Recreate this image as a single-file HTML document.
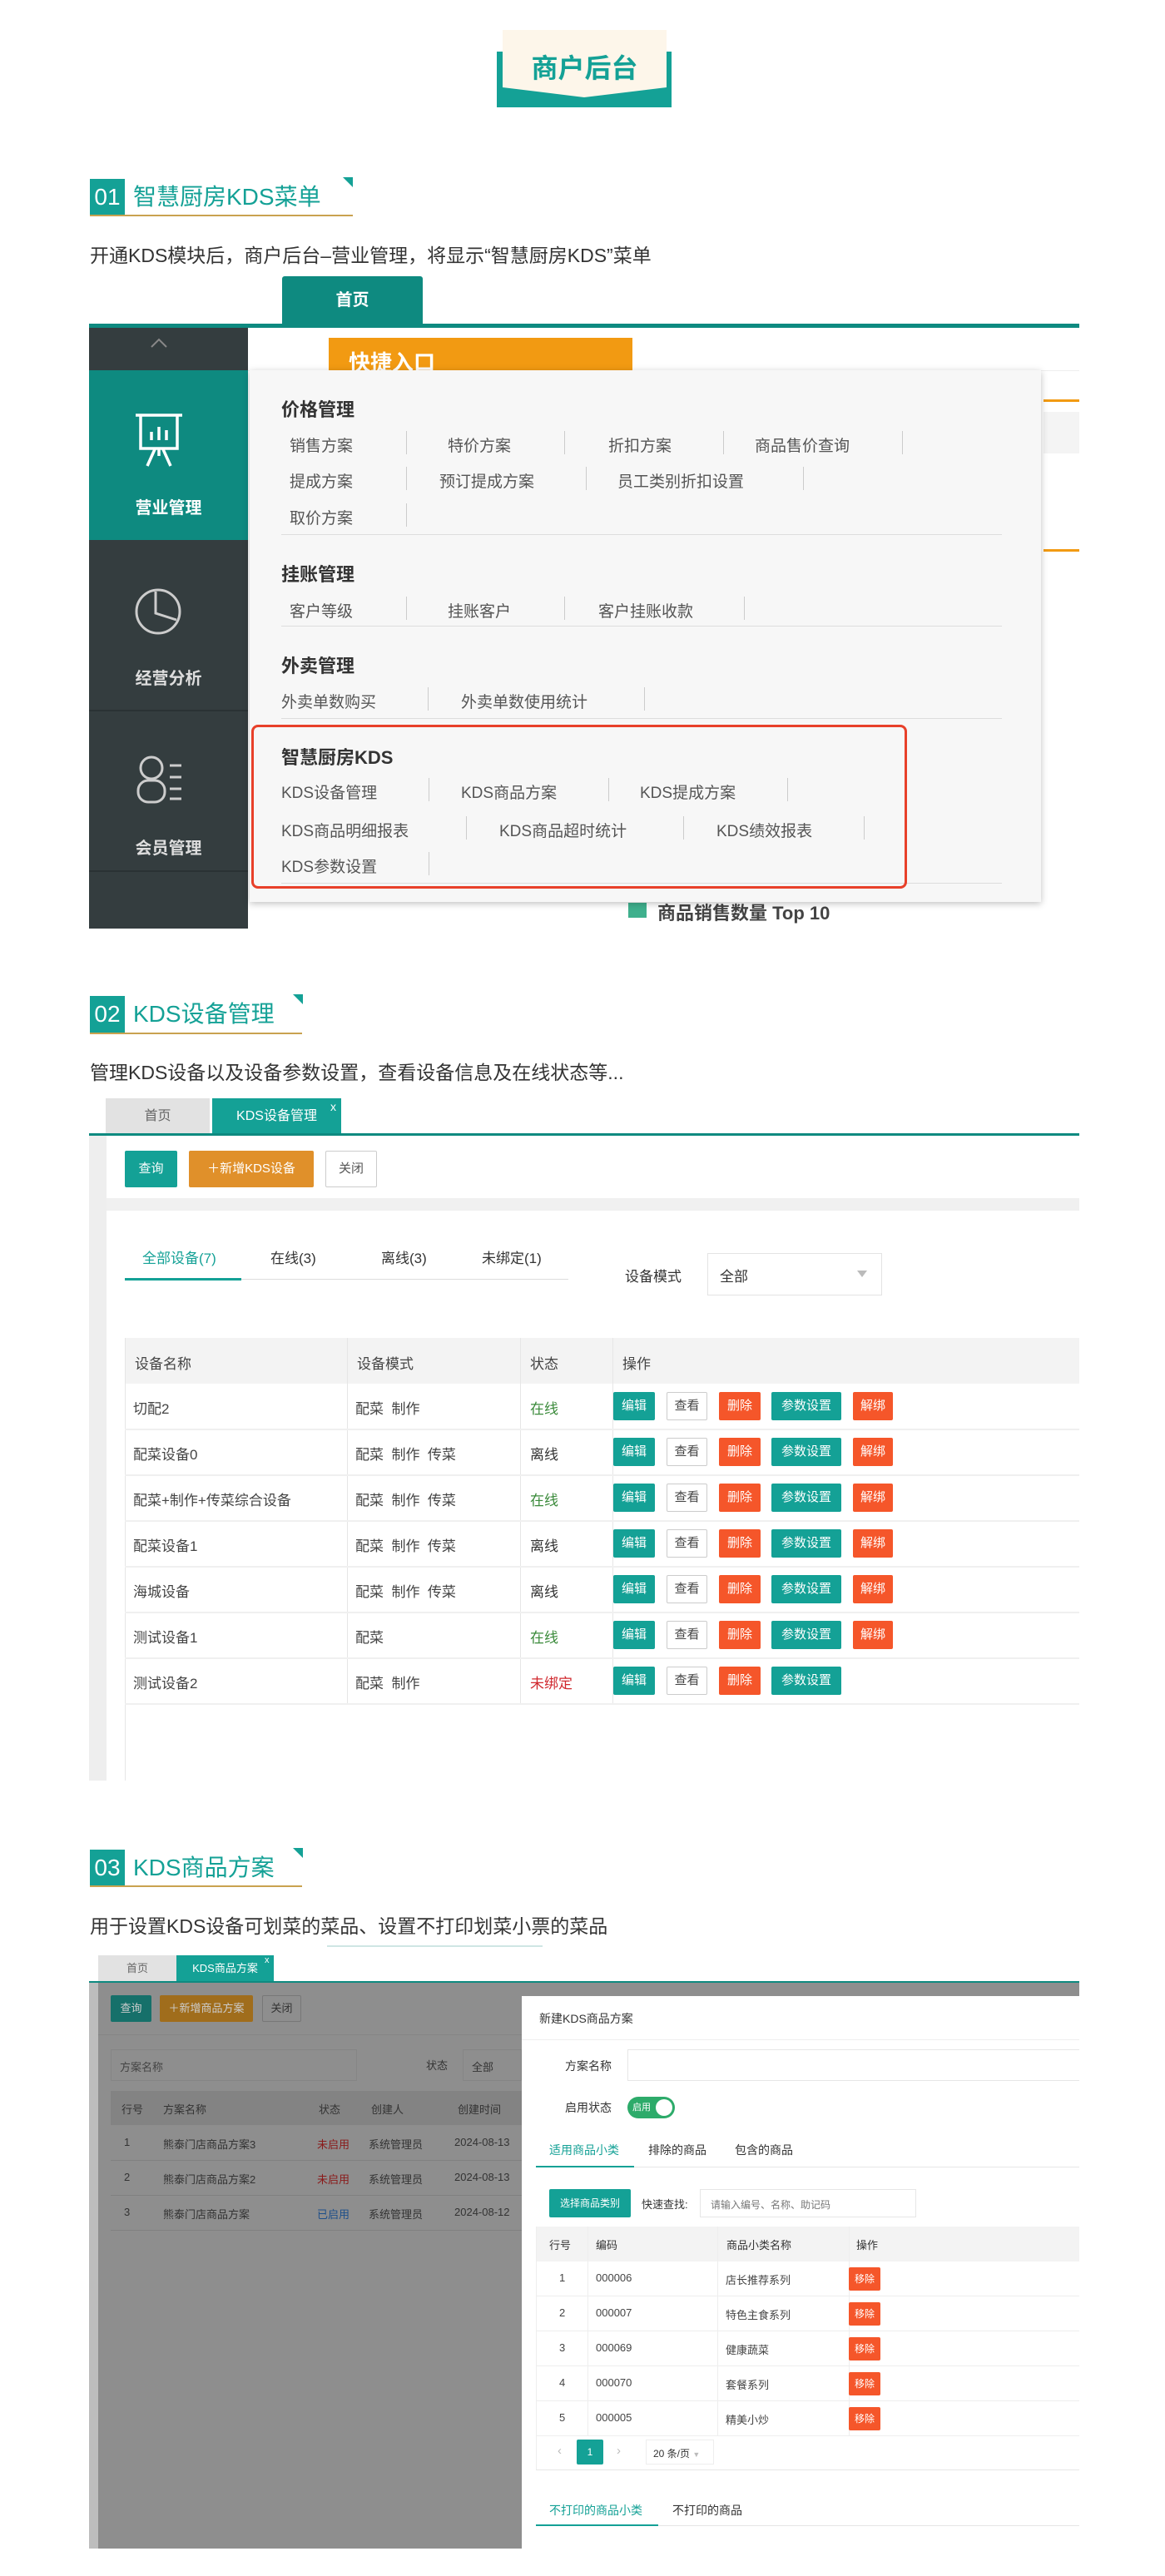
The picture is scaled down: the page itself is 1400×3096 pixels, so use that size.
<!DOCTYPE html>
<html><head><meta charset="utf-8"><style>
*{margin:0;padding:0;box-sizing:border-box}
body{width:1400px;height:3096px;background:#fff;position:relative;overflow:hidden;font-family:"Liberation Sans","Noto Sans CJK SC",sans-serif;color:#333}
.a{position:absolute;white-space:nowrap}
.sep{position:absolute;width:1px;background:#ccc}
.hl{position:absolute;height:1px;background:#ddd}
.btn{position:absolute;color:#fff;font-size:15px;text-align:center;border-radius:2px}
</style></head><body>

<!-- header badge -->
<div class="a" style="left:604px;top:36px;width:197px;height:70px;background:#fdf6ea"></div>
<div class="a" style="left:597px;top:62px;width:210px;height:67px;background:#14a196"></div>
<svg class="a" style="left:604px;top:62px" width="197" height="58"><polygon points="0,0 197,0 197,43 98,55 0,43" fill="#fdf6ea"/></svg>
<div class="a" style="left:604px;top:60px;width:197px;text-align:center;font-size:32px;font-weight:bold;color:#14a196;line-height:44px">商户后台</div>

<!-- section 01 -->
<div class="a" style="left:108px;top:215px;width:42px;height:43px;background:#14a196;color:#fff;font-size:28px;line-height:43px;text-align:center">01</div>
<div class="a" style="left:160px;top:215px;font-size:28px;line-height:43px;color:#14a196">智慧厨房KDS菜单</div>
<div class="a" style="left:108px;top:258px;width:316px;height:2px;background:#c9a24f"></div>
<svg class="a" style="left:410px;top:213px" width="14" height="14"><polygon points="2,0 14,0 14,12" fill="#14a196"/></svg>
<div class="a" style="left:108px;top:288px;font-size:23px;color:#333">开通KDS模块后，商户后台–营业管理，将显示“智慧厨房KDS”菜单</div>

<!-- screenshot 1 -->
<div class="a" style="left:339px;top:332px;width:169px;height:58px;background:#0e8a80;border-radius:3px 3px 0 0;color:#fff;font-size:20px;font-weight:bold;text-align:center;line-height:58px">首页</div>
<div class="a" style="left:107px;top:389px;width:1190px;height:5px;background:#0e8a80"></div>
<div class="a" style="left:107px;top:394px;width:191px;height:722px;background:#343d3f"></div>
<div class="a" style="left:107px;top:445px;width:191px;height:204px;background:#0e8a80"></div>
<div class="a" style="left:107px;top:853px;width:191px;height:2px;background:#2a3234"></div>
<div class="a" style="left:107px;top:1046px;width:191px;height:2px;background:#2a3234"></div>
<svg class="a" style="left:180px;top:405px" width="22" height="14"><polyline points="2,12 11,3 20,12" fill="none" stroke="#888" stroke-width="2"/></svg>
<svg class="a" style="left:160px;top:495px" width="62" height="70" fill="none" stroke="#fff" stroke-width="3.5"><path d="M3 4h56M9 4v40h44V4M22 24v10M31 18v16M40 22v12M26 45l-9 20M36 45l9 20M31 45v8"/></svg>
<div class="a" style="left:107px;top:594px;width:191px;text-align:center;color:#fff;font-size:20px;font-weight:bold">营业管理</div>
<svg class="a" style="left:160px;top:705px" width="60" height="60" fill="none" stroke="#ccc" stroke-width="3"><circle cx="30" cy="30" r="26"/><path d="M27 6v26l25 8"/></svg>
<div class="a" style="left:107px;top:799px;width:191px;text-align:center;color:#ddd;font-size:20px;font-weight:bold">经营分析</div>
<svg class="a" style="left:162px;top:906px" width="60" height="62" fill="none" stroke="#ccc" stroke-width="3"><circle cx="20" cy="17" r="13"/><rect x="4" y="32" width="32" height="26" rx="12"/><path d="M42 14h14M42 28h14M42 42h14M42 54h14"/></svg>
<div class="a" style="left:107px;top:1003px;width:191px;text-align:center;color:#ddd;font-size:20px;font-weight:bold">会员管理</div>
<div class="a" style="left:298px;top:394px;width:999px;height:722px;background:#fff"></div>
<div class="a" style="left:298px;top:394px;width:999px;height:52px;background:#fff;border-bottom:1px solid #eee"></div>
<div class="a" style="left:395px;top:406px;width:365px;height:54px;background:#f29a12;color:#fff;font-size:26px;font-weight:bold;padding:10px 24px">快捷入口</div>
<div class="a" style="left:1254px;top:480px;width:43px;height:3px;background:#f29a12"></div>
<div class="a" style="left:1254px;top:660px;width:43px;height:3px;background:#f29a12"></div>
<div class="a" style="left:1254px;top:495px;width:43px;height:50px;background:#f4f4f4"></div>
<div class="a" style="left:755px;top:1085px;width:22px;height:18px;background:#3fb08d"></div>
<div class="a" style="left:790px;top:1080px;font-size:22px;font-weight:bold;color:#444">商品销售数量 Top 10</div>

<!-- popup -->
<div class="a" style="left:300px;top:445px;width:951px;height:639px;background:#f7f7f7;box-shadow:0 2px 8px rgba(0,0,0,.25)"></div>
<div class="a" style="left:338px;top:475px;font-size:22px;font-weight:bold;color:#333">价格管理</div>
<div class="a" style="left:348px;top:521px;font-size:19px;color:#555">销售方案</div>
<div class="a" style="left:538px;top:521px;font-size:19px;color:#555">特价方案</div>
<div class="a" style="left:731px;top:521px;font-size:19px;color:#555">折扣方案</div>
<div class="a" style="left:907px;top:521px;font-size:19px;color:#555">商品售价查询</div>
<div class="sep" style="left:488px;top:518px;height:28px"></div><div class="sep" style="left:678px;top:518px;height:28px"></div><div class="sep" style="left:869px;top:518px;height:28px"></div><div class="sep" style="left:1084px;top:518px;height:28px"></div>
<div class="a" style="left:348px;top:564px;font-size:19px;color:#555">提成方案</div>
<div class="a" style="left:528px;top:564px;font-size:19px;color:#555">预订提成方案</div>
<div class="a" style="left:742px;top:564px;font-size:19px;color:#555">员工类别折扣设置</div>
<div class="sep" style="left:488px;top:561px;height:28px"></div><div class="sep" style="left:704px;top:561px;height:28px"></div><div class="sep" style="left:965px;top:561px;height:28px"></div>
<div class="a" style="left:348px;top:608px;font-size:19px;color:#555">取价方案</div>
<div class="sep" style="left:488px;top:605px;height:28px"></div>
<div class="hl" style="left:338px;top:642px;width:866px"></div>
<div class="a" style="left:338px;top:673px;font-size:22px;font-weight:bold;color:#333">挂账管理</div>
<div class="a" style="left:348px;top:720px;font-size:19px;color:#555">客户等级</div>
<div class="a" style="left:538px;top:720px;font-size:19px;color:#555">挂账客户</div>
<div class="a" style="left:719px;top:720px;font-size:19px;color:#555">客户挂账收款</div>
<div class="sep" style="left:488px;top:717px;height:28px"></div><div class="sep" style="left:678px;top:717px;height:28px"></div><div class="sep" style="left:894px;top:717px;height:28px"></div>
<div class="hl" style="left:338px;top:752px;width:866px"></div>
<div class="a" style="left:338px;top:783px;font-size:22px;font-weight:bold;color:#333">外卖管理</div>
<div class="a" style="left:338px;top:829px;font-size:19px;color:#555">外卖单数购买</div>
<div class="a" style="left:554px;top:829px;font-size:19px;color:#555">外卖单数使用统计</div>
<div class="sep" style="left:514px;top:826px;height:28px"></div><div class="sep" style="left:774px;top:826px;height:28px"></div>
<div class="hl" style="left:338px;top:863px;width:866px"></div>
<div class="a" style="left:338px;top:893px;font-size:22px;font-weight:bold;color:#333">智慧厨房KDS</div>
<div class="a" style="left:338px;top:938px;font-size:19px;color:#555">KDS设备管理</div>
<div class="a" style="left:554px;top:938px;font-size:19px;color:#555">KDS商品方案</div>
<div class="a" style="left:769px;top:938px;font-size:19px;color:#555">KDS提成方案</div>
<div class="sep" style="left:515px;top:935px;height:28px"></div><div class="sep" style="left:731px;top:935px;height:28px"></div><div class="sep" style="left:946px;top:935px;height:28px"></div>
<div class="a" style="left:338px;top:984px;font-size:19px;color:#555">KDS商品明细报表</div>
<div class="a" style="left:600px;top:984px;font-size:19px;color:#555">KDS商品超时统计</div>
<div class="a" style="left:861px;top:984px;font-size:19px;color:#555">KDS绩效报表</div>
<div class="sep" style="left:560px;top:981px;height:28px"></div><div class="sep" style="left:821px;top:981px;height:28px"></div><div class="sep" style="left:1038px;top:981px;height:28px"></div>
<div class="a" style="left:338px;top:1027px;font-size:19px;color:#555">KDS参数设置</div>
<div class="sep" style="left:515px;top:1024px;height:28px"></div>
<div class="hl" style="left:338px;top:1061px;width:866px"></div>
<div class="a" style="left:302px;top:871px;width:788px;height:197px;border:3px solid #e8402a;border-radius:8px"></div>

<!-- section 02 -->
<div class="a" style="left:108px;top:1197px;width:42px;height:44px;background:#14a196;color:#fff;font-size:28px;line-height:44px;text-align:center">02</div>
<div class="a" style="left:160px;top:1197px;font-size:28px;line-height:44px;color:#14a196">KDS设备管理</div>
<div class="a" style="left:108px;top:1241px;width:255px;height:2px;background:#c9a24f"></div>
<svg class="a" style="left:350px;top:1195px" width="14" height="14"><polygon points="2,0 14,0 14,12" fill="#14a196"/></svg>
<div class="a" style="left:108px;top:1270px;font-size:23px;color:#333">管理KDS设备以及设备参数设置，查看设备信息及在线状态等...</div>

<div class="a" style="left:107px;top:1363px;width:21px;height:777px;background:#eee"></div>
<div class="a" style="left:127px;top:1320px;width:125px;height:43px;background:#e2e2e2;color:#666;font-size:16px;text-align:center;line-height:43px">首页</div>
<div class="a" style="left:255px;top:1320px;width:155px;height:43px;background:#14a196;color:#fff;font-size:16px;text-align:center;line-height:43px">KDS设备管理</div>
<div class="a" style="left:397px;top:1322px;color:#fff;font-size:14px">x</div>
<div class="a" style="left:107px;top:1362px;width:1190px;height:3px;background:#0e8a80"></div>
<div class="btn" style="left:150px;top:1383px;width:63px;height:44px;line-height:44px;background:#14a196">查询</div>
<div class="btn" style="left:227px;top:1383px;width:150px;height:44px;line-height:44px;background:#e0902a">＋新增KDS设备</div>
<div class="btn" style="left:391px;top:1383px;width:62px;height:44px;line-height:42px;background:#fff;color:#555;border:1px solid #ccc">关闭</div>
<div class="a" style="left:128px;top:1440px;width:1169px;height:15px;background:#f0f0f0"></div>
<div class="a" style="left:171px;top:1498px;font-size:17px;color:#14a196">全部设备(7)</div>
<div class="a" style="left:325px;top:1498px;font-size:17px;color:#333">在线(3)</div>
<div class="a" style="left:458px;top:1498px;font-size:17px;color:#333">离线(3)</div>
<div class="a" style="left:579px;top:1498px;font-size:17px;color:#333">未绑定(1)</div>
<div class="a" style="left:150px;top:1537px;width:533px;height:1px;background:#ddd"></div>
<div class="a" style="left:150px;top:1536px;width:140px;height:3px;background:#14a196"></div>
<div class="a" style="left:751px;top:1520px;font-size:17px;color:#333">设备模式</div>
<div class="a" style="left:850px;top:1506px;width:210px;height:51px;border:1px solid #e3e3e3;font-size:17px;padding:13px 14px">全部</div>
<svg class="a" style="left:1030px;top:1527px" width="12" height="9"><polygon points="0,0 12,0 6,8" fill="#bbb"/></svg>
<div class="a" style="left:150px;top:1608px;width:1147px;height:55px;background:#f3f3f3"></div>
<div class="sep" style="left:417px;top:1608px;height:440px;background:#e6e6e6"></div>
<div class="sep" style="left:625px;top:1608px;height:440px;background:#e6e6e6"></div>
<div class="sep" style="left:736px;top:1608px;height:440px;background:#e6e6e6"></div>
<div class="sep" style="left:150px;top:1608px;height:532px;background:#e6e6e6"></div>
<div class="a" style="left:162px;top:1625px;font-size:17px;color:#444">设备名称</div>
<div class="a" style="left:429px;top:1625px;font-size:17px;color:#444">设备模式</div>
<div class="a" style="left:637px;top:1625px;font-size:17px;color:#444">状态</div>
<div class="a" style="left:748px;top:1625px;font-size:17px;color:#444">操作</div>
<div id="rows"></div>

<!-- section 03 -->
<div class="a" style="left:108px;top:2223px;width:42px;height:43px;background:#14a196;color:#fff;font-size:28px;line-height:43px;text-align:center">03</div>
<div class="a" style="left:160px;top:2223px;font-size:28px;line-height:43px;color:#14a196">KDS商品方案</div>
<div class="a" style="left:108px;top:2266px;width:255px;height:2px;background:#c9a24f"></div>
<svg class="a" style="left:350px;top:2221px" width="14" height="14"><polygon points="2,0 14,0 14,12" fill="#14a196"/></svg>
<div class="a" style="left:108px;top:2296px;font-size:23px;color:#333">用于设置KDS设备可划菜的菜品、设置不打印划菜小票的菜品</div>
<div class="a" style="left:393px;top:2338px;width:259px;height:2px;background:#cfe6e4"></div>

<div class="a" style="left:118px;top:2350px;width:94px;height:32px;background:#e2e2e2;color:#666;font-size:13px;text-align:center;line-height:32px">首页</div>
<div class="a" style="left:212px;top:2350px;width:117px;height:32px;background:#14a196;color:#fff;font-size:13px;text-align:center;line-height:32px">KDS商品方案</div>
<div class="a" style="left:318px;top:2350px;color:#fff;font-size:11px">x</div>
<div class="a" style="left:107px;top:2381px;width:1190px;height:2px;background:#0e8a80"></div>
<div class="a" style="left:107px;top:2383px;width:520px;height:680px;background:#8e8e8e"></div>
<div class="a" style="left:107px;top:2383px;width:11px;height:680px;background:#bdbdbd"></div>
<div class="a" style="left:627px;top:2383px;width:670px;height:16px;background:#8e8e8e"></div>
<div class="btn" style="left:133px;top:2398px;width:49px;height:32px;line-height:32px;background:#16706a;font-size:13px;color:#ccc">查询</div>
<div class="btn" style="left:192px;top:2398px;width:112px;height:32px;line-height:32px;background:#a06d1c;font-size:13px;color:#ccc">＋新增商品方案</div>
<div class="btn" style="left:315px;top:2398px;width:47px;height:32px;line-height:30px;background:#8e8e8e;border:1px solid #777;font-size:13px;color:#333">关闭</div>
<div class="a" style="left:118px;top:2445px;width:509px;height:1px;background:#858585"></div>
<div class="a" style="left:133px;top:2463px;width:296px;height:38px;border:1px solid #858585;font-size:13px;color:#444;padding:10px">方案名称</div>
<div class="a" style="left:512px;top:2472px;font-size:13px;color:#333">状态</div>
<div class="a" style="left:556px;top:2463px;width:71px;height:38px;border:1px solid #858585;font-size:13px;color:#333;padding:10px">全部</div>
<div class="a" style="left:133px;top:2513px;width:494px;height:41px;background:#838383"></div>
<div class="a" style="left:146px;top:2525px;font-size:13px;color:#333">行号</div>
<div class="a" style="left:196px;top:2525px;font-size:13px;color:#333">方案名称</div>
<div class="a" style="left:383px;top:2525px;font-size:13px;color:#333">状态</div>
<div class="a" style="left:446px;top:2525px;font-size:13px;color:#333">创建人</div>
<div class="a" style="left:550px;top:2525px;font-size:13px;color:#333">创建时间</div>
<div class="a" style="left:149px;top:2567px;font-size:13px;color:#333">1</div><div class="a" style="left:196px;top:2567px;font-size:13px;color:#333">熊泰门店商品方案3</div><div class="a" style="left:381px;top:2567px;font-size:13px;color:#8a1a1a">未启用</div><div class="a" style="left:443px;top:2567px;font-size:13px;color:#333">系统管理员</div><div class="a" style="left:546px;top:2567px;font-size:13px;color:#333">2024-08-13</div>
<div class="a" style="left:149px;top:2609px;font-size:13px;color:#333">2</div><div class="a" style="left:196px;top:2609px;font-size:13px;color:#333">熊泰门店商品方案2</div><div class="a" style="left:381px;top:2609px;font-size:13px;color:#8a1a1a">未启用</div><div class="a" style="left:443px;top:2609px;font-size:13px;color:#333">系统管理员</div><div class="a" style="left:546px;top:2609px;font-size:13px;color:#333">2024-08-13</div>
<div class="a" style="left:149px;top:2651px;font-size:13px;color:#333">3</div><div class="a" style="left:196px;top:2651px;font-size:13px;color:#333">熊泰门店商品方案</div><div class="a" style="left:381px;top:2651px;font-size:13px;color:#1d4f8a">已启用</div><div class="a" style="left:443px;top:2651px;font-size:13px;color:#333">系统管理员</div><div class="a" style="left:546px;top:2651px;font-size:13px;color:#333">2024-08-12</div>
<div class="a" style="left:133px;top:2596px;width:494px;height:1px;background:#808080"></div>
<div class="a" style="left:133px;top:2638px;width:494px;height:1px;background:#808080"></div>
<div class="a" style="left:133px;top:2680px;width:494px;height:1px;background:#808080"></div>

<!-- modal -->
<div class="a" style="left:627px;top:2399px;width:670px;height:664px;background:#fff"></div>
<div class="a" style="left:648px;top:2416px;font-size:14px;color:#333">新建KDS商品方案</div>
<div class="a" style="left:627px;top:2451px;width:670px;height:1px;background:#eee"></div>
<div class="a" style="left:679px;top:2473px;font-size:14px;color:#333">方案名称</div>
<div class="a" style="left:754px;top:2463px;width:543px;height:38px;border:1px solid #e6e6e6;border-right:none"></div>
<div class="a" style="left:679px;top:2523px;font-size:14px;color:#333">启用状态</div>
<div class="a" style="left:754px;top:2520px;width:57px;height:26px;background:#2dab6a;border-radius:13px;color:#fff;font-size:11px;line-height:26px;padding-left:6px">启用</div>
<div class="a" style="left:788px;top:2523px;width:20px;height:20px;background:#fff;border-radius:10px"></div>
<div class="a" style="left:660px;top:2574px;font-size:14px;color:#14a196">适用商品小类</div>
<div class="a" style="left:779px;top:2574px;font-size:14px;color:#333">排除的商品</div>
<div class="a" style="left:883px;top:2574px;font-size:14px;color:#333">包含的商品</div>
<div class="a" style="left:644px;top:2604px;width:653px;height:1px;background:#e6e6e6"></div>
<div class="a" style="left:644px;top:2603px;width:118px;height:2px;background:#14a196"></div>
<div class="btn" style="left:660px;top:2631px;width:98px;height:34px;line-height:34px;background:#14a196;font-size:12px">选择商品类别</div>
<div class="a" style="left:771px;top:2639px;font-size:13px;color:#333">快速查找:</div>
<div class="a" style="left:841px;top:2631px;width:260px;height:34px;border:1px solid #e6e6e6;font-size:12px;color:#777;padding:9px 12px">请输入编号、名称、助记码</div>
<div class="a" style="left:644px;top:2676px;width:653px;height:42px;background:#f3f3f3"></div>
<div class="a" style="left:660px;top:2688px;font-size:13px;color:#333">行号</div>
<div class="a" style="left:716px;top:2688px;font-size:13px;color:#333">编码</div>
<div class="a" style="left:873px;top:2688px;font-size:13px;color:#333">商品小类名称</div>
<div class="a" style="left:1029px;top:2688px;font-size:13px;color:#333">操作</div>
<div class="sep" style="left:706px;top:2676px;height:252px;background:#eee"></div>
<div class="sep" style="left:862px;top:2676px;height:252px;background:#eee"></div>
<div class="sep" style="left:1020px;top:2676px;height:252px;background:#eee"></div>
<div class="sep" style="left:644px;top:2676px;height:292px;background:#eee"></div>
<div id="mrows"></div>
<div class="a" style="left:670px;top:2937px;font-size:15px;color:#bbb">‹</div>
<div class="btn" style="left:693px;top:2932px;width:32px;height:30px;line-height:30px;background:#14a196;font-size:12px">1</div>
<div class="a" style="left:741px;top:2937px;font-size:15px;color:#bbb">›</div>
<div class="a" style="left:776px;top:2932px;width:82px;height:30px;border:1px solid #eee;font-size:12px;color:#333;padding:7px 8px">20 条/页 <span style="color:#bbb;font-size:9px">▼</span></div>
<div class="a" style="left:644px;top:2968px;width:653px;height:1px;background:#e6e6e6"></div>
<div class="a" style="left:660px;top:3007px;font-size:14px;color:#14a196">不打印的商品小类</div>
<div class="a" style="left:808px;top:3007px;font-size:14px;color:#333">不打印的商品</div>
<div class="a" style="left:644px;top:3035px;width:653px;height:1px;background:#e6e6e6"></div>
<div class="a" style="left:644px;top:3034px;width:147px;height:2px;background:#14a196"></div>

<script>
var r=[["切配2","配菜  制作","在线","#3a8a3a",1],["配菜设备0","配菜  制作  传菜","离线","#333",1],["配菜+制作+传菜综合设备","配菜  制作  传菜","在线","#3a8a3a",1],["配菜设备1","配菜  制作  传菜","离线","#333",1],["海城设备","配菜  制作  传菜","离线","#333",1],["测试设备1","配菜","在线","#3a8a3a",1],["测试设备2","配菜  制作","未绑定","#d0282e",0]];
var h="";
r.forEach(function(x,i){var t=1663+i*55,c=t+27;
h+='<div class="a" style="left:150px;top:'+(t+54)+'px;width:1147px;height:2px;background:#f0f0f0"></div>';
h+='<div class="a" style="left:160px;top:'+(c-11)+'px;font-size:17px;color:#444">'+x[0]+'</div>';
h+='<div class="a" style="left:427px;top:'+(c-11)+'px;font-size:17px;color:#444;white-space:pre">'+x[1]+'</div>';
h+='<div class="a" style="left:637px;top:'+(c-11)+'px;font-size:17px;color:'+x[3]+'">'+x[2]+'</div>';
var b=[[737,50,"#14a196","编辑","#fff"],[801,49,"#fff","查看","#444"],[864,50,"#f5562a","删除","#fff"],[927,84,"#14a196","参数设置","#fff"]];
if(x[4])b.push([1025,48,"#f5562a","解绑","#fff"]);
b.forEach(function(q){h+='<div class="btn" style="left:'+q[0]+'px;top:'+(c-17)+'px;width:'+q[1]+'px;height:34px;line-height:34px;background:'+q[2]+';color:'+q[4]+';'+(q[2]=="#fff"?'border:1px solid #ccc;line-height:32px;':'')+'">'+q[3]+'</div>'});
});
document.getElementById("rows").innerHTML=h;
var m=[["1","000006","店长推荐系列"],["2","000007","特色主食系列"],["3","000069","健康蔬菜"],["4","000070","套餐系列"],["5","000005","精美小炒"]];
h="";
m.forEach(function(x,i){var t=2718+i*42;
h+='<div class="a" style="left:644px;top:'+(t+41)+'px;width:653px;height:1px;background:#eee"></div>';
h+='<div class="a" style="left:672px;top:'+(t+12)+'px;font-size:13px;color:#444">'+x[0]+'</div>';
h+='<div class="a" style="left:716px;top:'+(t+12)+'px;font-size:13px;color:#444">'+x[1]+'</div>';
h+='<div class="a" style="left:872px;top:'+(t+12)+'px;font-size:13px;color:#444">'+x[2]+'</div>';
h+='<div class="btn" style="left:1020px;top:'+(t+7)+'px;width:38px;height:28px;line-height:28px;background:#f5562a;font-size:12px">移除</div>';
});
document.getElementById("mrows").innerHTML=h;
</script>
</body></html>
